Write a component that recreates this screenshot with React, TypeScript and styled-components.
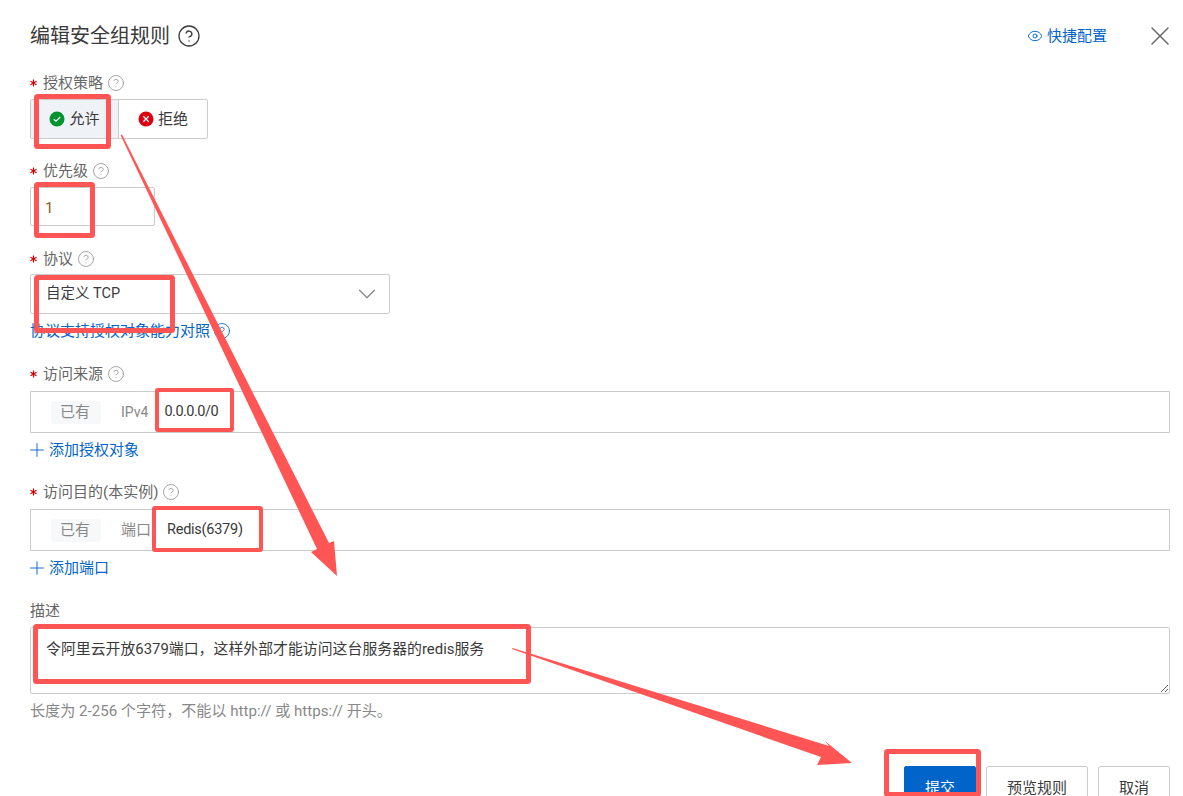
import React from "react";
import styled, { createGlobalStyle } from "styled-components";
import { ChevronDown, CircleHelp, Eye, Plus, X } from "lucide-react";

const Global = createGlobalStyle`
  html, body { margin: 0; padding: 0; background: #fff; }
  body { font-family: Roboto, "Noto Sans CJK SC", sans-serif; }
`;

const Page = styled.div`
  position: relative;
  width: 1183px;
  height: 796px;
  overflow: hidden;
  box-sizing: border-box;
  padding: 0 13px 0 30px;
  font-size: 15px;
  line-height: 22px;
  color: #3a3a3a;
  background: #fff;
`;

const Header = styled.header`
  height: 72px;
  display: flex;
  align-items: center;
  justify-content: space-between;
`;

const TitleGroup = styled.div`
  display: flex;
  align-items: center;
  gap: 7px;
  color: #3a3a3a;
`;

const Title = styled.h1`
  margin: 0;
  font-size: 20px;
  font-weight: 400;
  line-height: 28px;
  color: #3a3a3a;
`;

const HeaderActions = styled.div`
  display: flex;
  align-items: center;
  margin-right: -6px;
  color: #666;
`;

const QuickLink = styled.a`
  display: flex;
  align-items: center;
  gap: 4px;
  margin-right: 37px;
  color: #0064c8;
  font-size: 15px;
  line-height: 22px;
`;

const Field = styled.section<{ $gap: number }>`
  margin-top: ${(p) => p.$gap}px;
`;

const Label = styled.div<{ $after: number }>`
  display: flex;
  align-items: center;
  height: 22px;
  margin-bottom: ${(p) => p.$after}px;
  font-size: 15px;
  line-height: 22px;
  color: #666;
  svg.help { margin-left: 4px; color: #888; }
`;

const Star = styled.svg`
  flex: none;
  margin-right: 6px;
`;

const Segment = styled.div`
  display: inline-flex;
  height: 40px;
  box-sizing: border-box;
  border: 1px solid #ccc;
  border-radius: 2px;
`;

const SegmentOption = styled.div<{ $active?: boolean; $width: number }>`
  width: ${(p) => p.$width}px;
  display: flex;
  align-items: center;
  justify-content: center;
  gap: 4px;
  background: ${(p) => (p.$active ? "#eff2f6" : "#fff")};
  border-right: ${(p) => (p.$active ? "1px solid #ccc" : "none")};
`;

const NumberBox = styled.div`
  width: 125px;
  height: 39px;
  box-sizing: border-box;
  border: 1px solid #ccc;
  border-radius: 2px;
  padding-left: 14px;
  line-height: 41px;
  color: #8a5a20;
`;

const SelectBox = styled.div`
  width: 360px;
  height: 40px;
  box-sizing: border-box;
  display: flex;
  align-items: center;
  justify-content: space-between;
  border: 1px solid #ccc;
  border-radius: 2px;
  padding: 0 7px 0 15px;
  font-size: 14.5px;
  svg { color: #888; }
`;

const TextLink = styled.a`
  display: flex;
  align-items: center;
  gap: 1px;
  height: 22px;
  margin-top: 6px;
  color: #0064c8;
  font-size: 15px;
  line-height: 22px;
  svg.plus { margin-left: -4px; }
  svg.help { margin-left: 2px; }
`;

const TagField = styled.div`
  height: 42px;
  box-sizing: border-box;
  display: flex;
  align-items: center;
  border: 1px solid #ccc;
  padding-left: 20px;
`;

const Chip = styled.span`
  width: 50px;
  height: 23px;
  box-sizing: border-box;
  padding-right: 2px;
  border-radius: 3px;
  background: #f7f8fa;
  color: #888;
  text-align: center;
  font-size: 15px;
  line-height: 23px;
`;

const TagName = styled.span<{ $size: number }>`
  margin-left: 20px;
  color: #888;
  font-size: ${(p) => p.$size}px;
`;

const TagValue = styled.span<{ $spacing?: number }>`
  margin-left: 16px;
  color: #3a3a3a;
  font-size: 14.5px;
  letter-spacing: ${(p) => p.$spacing ?? 0}px;
`;

const DescArea = styled.textarea`
  display: block;
  width: 100%;
  height: 67px;
  box-sizing: border-box;
  border: 1px solid #ccc;
  border-radius: 2px;
  padding: 10px 15px;
  margin: 0;
  outline: none;
  font-family: inherit;
  font-size: 14.9px;
  line-height: 22px;
  color: #3a3a3a;
`;

const Hint = styled.p`
  margin: 6px 0 0;
  height: 22px;
  font-size: 15.1px;
  line-height: 22px;
  color: #888;
`;

const Footer = styled.footer`
  display: flex;
  justify-content: flex-end;
  gap: 10px;
  margin-top: 44px;
`;

const Button = styled.button<{ $primary?: boolean; $width: number }>`
  width: ${(p) => p.$width}px;
  height: 40px;
  padding: 0;
  border-radius: 2px;
  border: 1px solid ${(p) => (p.$primary ? "#0064c8" : "#ccc")};
  background: ${(p) => (p.$primary ? "#0064c8" : "#fff")};
  color: ${(p) => (p.$primary ? "#fff" : "#3a3a3a")};
  font-family: inherit;
  font-size: 15px;
`;

const Overlay = styled.svg`
  position: absolute;
  inset: 0;
  pointer-events: none;
`;

const RED = "#ff5555";

const Mark = styled.rect`
  fill: none;
  stroke: ${RED};
  stroke-linejoin: round;
`;

const Arrow = styled.polygon`
  fill: ${RED};
`;

const Status = ({ kind }: { kind: "ok" | "no" }) => (
  <svg width="16" height="16" viewBox="0 0 16 16">
    <circle cx="8" cy="8" r="7.5" fill={kind === "ok" ? "#009431" : "#dd0011"} />
    {kind === "ok" ? (
      <path d="M4.8 8.2 7 10.2l4.2-4.2" fill="none" stroke="#fff" strokeWidth="1.2" />
    ) : (
      <path d="M5.3 5.3l5.4 5.4M10.7 5.3l-5.4 5.4" fill="none" stroke="#fff" strokeWidth="1.3" />
    )}
  </svg>
);

const Required = () => (
  <Star width="7" height="8" viewBox="0 0 7 8">
    <path d="M3.5 0.5v7M0.5 2.2l6 3.6M6.5 2.2l-6 3.6" fill="none" stroke="#d40000" strokeWidth="1.2" />
  </Star>
);

const Help = () => <CircleHelp className="help" size={18} strokeWidth={1} />;

export default function App() {
  return (
    <Page>
      <Global />
      <Header>
        <TitleGroup>
          <Title>编辑安全组规则</Title>
          <CircleHelp size={24} strokeWidth={1.3} />
        </TitleGroup>
        <HeaderActions>
          <QuickLink>
            <Eye size={16} strokeWidth={1.4} />
            快捷配置
          </QuickLink>
          <X size={32} strokeWidth={1.1} />
        </HeaderActions>
      </Header>

      <Field $gap={0}>
        <Label $after={5}><Required />授权策略<Help /></Label>
        <Segment>
          <SegmentOption $active $width={87}><Status kind="ok" />允许</SegmentOption>
          <SegmentOption $width={88}><Status kind="no" />拒绝</SegmentOption>
        </Segment>
      </Field>

      <Field $gap={21}>
        <Label $after={5}><Required />优先级<Help /></Label>
        <NumberBox>1</NumberBox>
      </Field>

      <Field $gap={22}>
        <Label $after={4}><Required />协议<Help /></Label>
        <SelectBox>
          自定义 TCP
          <ChevronDown size={30} strokeWidth={1} />
        </SelectBox>
        <TextLink>协议支持授权对象能力对照<CircleHelp className="help" size={18} strokeWidth={1.1} /></TextLink>
      </Field>

      <Field $gap={21}>
        <Label $after={6}><Required />访问来源<Help /></Label>
        <TagField>
          <Chip>已有</Chip>
          <TagName $size={14}>IPv4</TagName>
          <TagValue $spacing={-0.5}>0.0.0.0/0</TagValue>
        </TagField>
        <TextLink><Plus className="plus" size={22} strokeWidth={1} />添加授权对象</TextLink>
      </Field>

      <Field $gap={20}>
        <Label $after={6}><Required />访问目的(本实例)<Help /></Label>
        <TagField>
          <Chip>已有</Chip>
          <TagName $size={15}>端口</TagName>
          <TagValue $spacing={-0.25}>Redis(6379)</TagValue>
        </TagField>
        <TextLink><Plus className="plus" size={22} strokeWidth={1} />添加端口</TextLink>
      </Field>

      <Field $gap={21}>
        <Label $after={5}>描述</Label>
        <DescArea readOnly value="令阿里云开放6379端口，这样外部才能访问这台服务器的redis服务" />
        <Hint>长度为 2-256 个字符，不能以 http:// 或 https:// 开头。</Hint>
      </Field>

      <Footer>
        <Button $primary $width={72}>提交</Button>
        <Button $width={102}>预览规则</Button>
        <Button $width={72}>取消</Button>
      </Footer>

      <Overlay width="1183" height="796" viewBox="0 0 1183 796">
        <Mark x="36.5" y="96.5" width="72" height="50" rx="1" strokeWidth="5" />
        <Mark x="36.5" y="184.5" width="56" height="51" rx="1" strokeWidth="5" />
        <Mark x="36.5" y="277.5" width="136" height="53" rx="1" strokeWidth="5" />
        <Mark x="157" y="390" width="75" height="40" rx="1" strokeWidth="4" />
        <Mark x="154" y="508" width="107" height="42" rx="1" strokeWidth="4" />
        <Mark x="35.5" y="626.5" width="493" height="55" rx="1" strokeWidth="5" />
        <Mark x="886.5" y="751.5" width="92" height="43" rx="1" strokeWidth="5" />
        <Arrow points="120.5,135 122,134.5 329,543 334,541 337,576 311,552 317,549" />
        <Arrow points="512,649 512.5,648 829,746 825,741 852,763 817,765 821,757" />
      </Overlay>
    </Page>
  );
}
